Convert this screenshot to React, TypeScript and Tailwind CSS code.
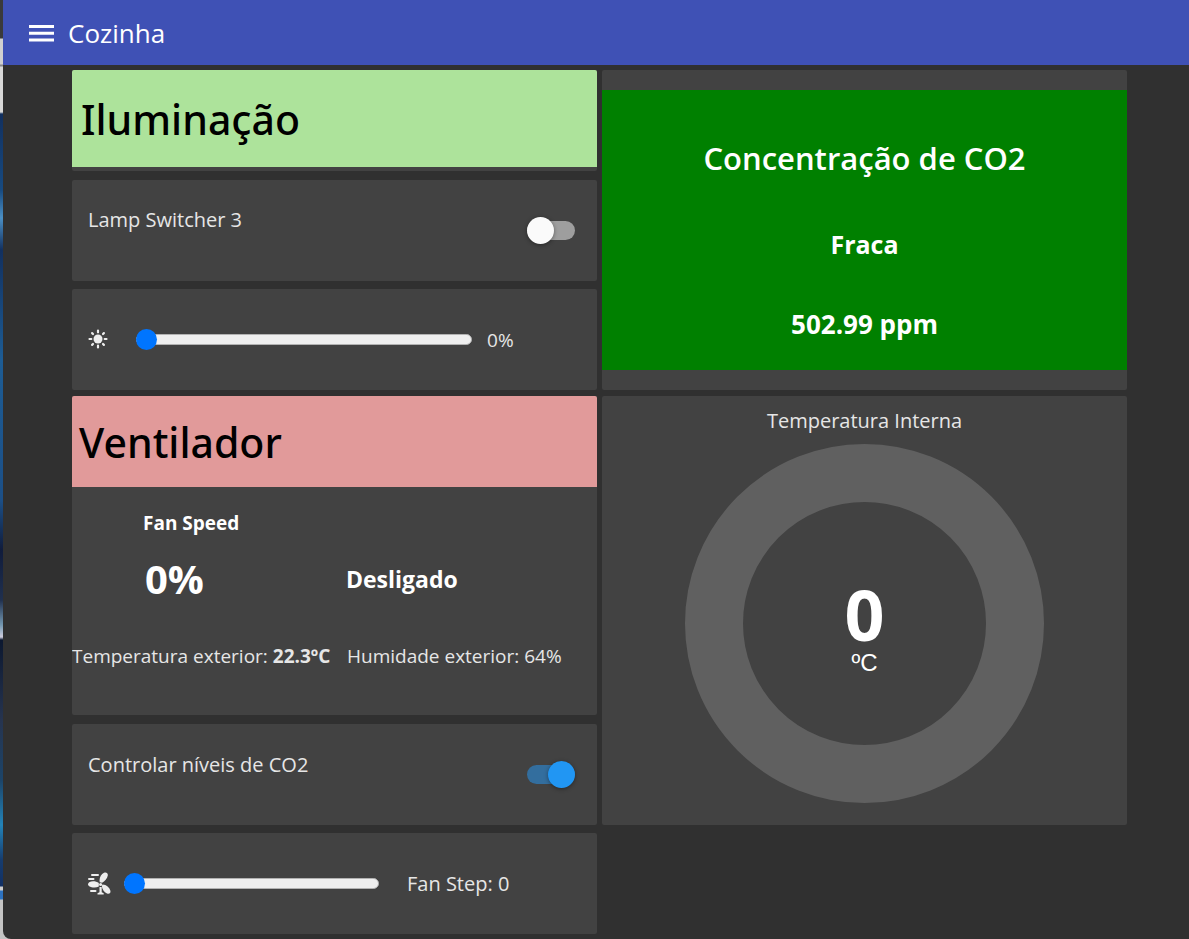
import { useState } from "react";
import type { ReactNode } from "react";

function MenuIcon() {
  return (
    <svg className="h-5 w-[25px]" viewBox="0 0 25 20" fill="#fff" aria-hidden="true">
      <path d="M0 2h25v3H0zM0 8.700h25v3H0zM0 15.400h25v3H0z" />
    </svg>
  );
}

function SunIcon() {
  return (
    <svg className="h-[21px] w-5 shrink-0" viewBox="0 0 20 21" stroke="#eee" strokeWidth="2.200" strokeLinecap="round" aria-hidden="true">
      <circle cx="10" cy="10" r="4.500" fill="#eee" stroke="none" />
      <path d="M10 1.500v1.800M10 16.700v1.800M1.500 10h1.800M16.700 10h1.800M4.100 4.100l.9.900M15 15l.9.900M4.100 15.900l.9-.9M15 5l.9-.9" />
    </svg>
  );
}

function FanIcon() {
  return (
    <svg className="h-[23px] w-[23px] shrink-0" viewBox="0 0 23 23" fill="#eee" aria-hidden="true">
      <path d="M11.800 10.200C10.800 6.700 12.800 2.300 16 .800c2.200-1 4.200.300 3.800 2.700-.5 3.300-3.200 5.700-5.700 7.200z" />
      <path d="M10.800 14.500c-2.800 1.400-7.200 1.100-9.700-.3-1.500-.9-1.400-3.100.1-4 2.800-1.500 7-1 9.600.700z" />
      <path d="M14.700 12.500c3.600.1 6.900 3.300 7.700 6.300.5 2.300-1.200 3.500-3.400 2.700-3.100-1.300-4.900-4.400-5.200-7.700z" />
      <path d="M11.500 15h2.200v5.200l2 1v1.300H9.500v-1.300l2-1z" />
      <circle cx="12.600" cy="12.500" r="1.500" />
      <path d="M4 3h6M1 7h4.500M3 19h4.500" stroke="#eee" strokeWidth="2" strokeLinecap="round" />
    </svg>
  );
}

function Card({ className = "", children }: { className?: string; children?: ReactNode }) {
  return <section className={`overflow-hidden rounded-xs bg-[#424242] ${className}`}>{children}</section>;
}

function SwitchCard({ id, label, initial }: { id: string; label: string; initial: boolean }) {
  const [on, setOn] = useState(initial);
  return (
    <Card className="flex h-[101px] items-center justify-between pr-[22px] pl-4">
      <label htmlFor={id} className="pb-5 text-[20px] leading-7 text-[#e6e6e6]">
        {label}
      </label>
      <input
        id={id}
        type="checkbox"
        role="switch"
        checked={on}
        onChange={(e) => setOn(e.target.checked)}
        className="relative h-[19px] w-12 appearance-none rounded-full bg-[#9e9e9e] before:absolute before:-top-1 before:left-0 before:size-[27px] before:rounded-full before:bg-[#fafafa] before:shadow-[0_1px_4px_rgba(0,0,0,0.4)] checked:bg-[#336e9e] checked:before:left-[21px] checked:before:bg-[#2196f3]"
      />
    </Card>
  );
}

const rangeClass =
  "h-[11px] appearance-none rounded-full border border-[#b2b2b2] bg-[#efefef] [&::-webkit-slider-thumb]:-ml-px [&::-webkit-slider-thumb]:size-[21px] [&::-webkit-slider-thumb]:appearance-none [&::-webkit-slider-thumb]:rounded-full [&::-webkit-slider-thumb]:bg-[#0075ff]";

function LightSlider() {
  const [value, setValue] = useState(0);
  return (
    <Card className="flex h-[101px] items-center px-4">
      <SunIcon />
      <input
        type="range"
        aria-label="Intensidade"
        min={0}
        max={100}
        value={value}
        onChange={(e) => setValue(Number(e.target.value))}
        className={`mr-[15px] ml-7 w-[336px] ${rangeClass}`}
      />
      <output className="text-[19px] leading-7 text-[#e6e6e6]">{value}%</output>
    </Card>
  );
}

function FanSlider() {
  const [value, setValue] = useState(0);
  return (
    <Card className="flex h-[101px] items-center px-4">
      <FanIcon />
      <input
        type="range"
        aria-label="Fan Step"
        min={0}
        max={5}
        value={value}
        onChange={(e) => setValue(Number(e.target.value))}
        className={`mr-7 ml-[13px] w-[255px] ${rangeClass}`}
      />
      <output className="text-[20px] leading-7 text-[#e6e6e6]">Fan Step: {value}</output>
    </Card>
  );
}

export default function App() {
  return (
    <div className="flex min-h-screen font-['Open_Sans','Noto_Sans',sans-serif]">
      <div className="flex min-w-0 flex-1 bg-[linear-gradient(to_bottom,#3a3a3a_0_38px,#d0d0d0_39px_64px,#888_65px_66px,#d8d8d8_67px_112px,#12305f_114px,#174a80_190px,#4b8fc4_218px,#12305f_250px,#1d5c94_360px,#1c4f86_500px,#101c3c_550px,#20304e_600px,#7397b0_625px,#ccd_637px,#0c1830_640px,#26344f_720px,#1c4468_780px,#2383b8_825px,#163c6e_860px,#123064_886px,#ccc_887px_890px,#2d72c0_891px_899px,#c4c4c4_900px)] pl-[3px]">
        <div className="min-w-0 flex-1 rounded-bl-lg bg-[#303030]">
          <header className="flex h-[65px] items-center gap-[14px] bg-[#3f51b5] pt-px pl-[26px] text-white">
            <button type="button" aria-label="Menu">
              <MenuIcon />
            </button>
            <h1 className="text-[26px] leading-9">Cozinha</h1>
          </header>

          <main className="flex flex-col gap-1.5 pt-[5px] pr-[62px] pb-[5px] pl-[69px]">
            <div className="grid grid-cols-2 gap-[5px]">
              <div className="flex h-80 flex-col justify-between">
                <Card className="h-[101px]">
                  <h2 className="flex h-[97px] items-center bg-[#ade39b] pt-0.5 pl-[9px] font-['Noto_Sans','Open_Sans',sans-serif] text-[41px] leading-none font-medium text-black">
                    Iluminação
                  </h2>
                </Card>
                <SwitchCard id="lamp" label="Lamp Switcher 3" initial={false} />
                <LightSlider />
              </div>
              <Card className="flex h-80 flex-col justify-center">
                <div className="flex h-[280px] flex-col items-center bg-[#008000] pt-12 text-white">
                  <h2 className="text-[31px] leading-10 font-semibold">Concentração de CO2</h2>
                  <p className="mt-12 text-[25px] leading-9 font-bold">Fraca</p>
                  <p className="mt-11 text-[26px] leading-9 font-bold">502.99 ppm</p>
                </div>
              </Card>
            </div>

            <div className="grid grid-cols-2 gap-x-[5px] gap-y-2">
              <div className="flex h-[429px] flex-col justify-between">
                <Card className="h-[319px]">
                  <h2 className="flex h-[91px] items-center bg-[#e19a9a] pt-0.5 pl-[7px] font-['Noto_Sans','Open_Sans',sans-serif] text-[41px] leading-none font-medium text-black">
                    Ventilador
                  </h2>
                  <p className="mt-[22px] pl-[71px] text-[19px] leading-7 font-bold text-white">Fan Speed</p>
                  <div className="mt-[15px] flex items-center font-bold text-white">
                    <p className="w-[274px] pl-[73px] text-[40px] leading-[54px]">0%</p>
                    <p className="text-[23px] leading-[54px]">Desligado</p>
                  </div>
                  <div className="mt-9 flex text-[19px] leading-7 whitespace-nowrap text-[#e6e6e6]">
                    <p className="w-[275px]">
                      Temperatura exterior: <b>22.3ºC</b>
                    </p>
                    <p>Humidade exterior: 64%</p>
                  </div>
                </Card>
                <SwitchCard id="co2" label="Controlar níveis de CO2" initial />
              </div>
              <Card className="flex h-[429px] flex-col items-center pt-[11px]">
                <h2 className="text-[20px] leading-7 text-[#e6e6e6]">Temperatura Interna</h2>
                <div className="mt-[9px] flex size-[359px] flex-col items-center justify-center rounded-full border-[58px] border-[#606060] pt-2 text-white">
                  <p className="text-[70px] leading-[70px] font-bold">0</p>
                  <p className="font-['Liberation_Sans',sans-serif] text-2xl leading-7">ºC</p>
                </div>
              </Card>
              <FanSlider />
            </div>
          </main>
        </div>
      </div>
    </div>
  );
}
